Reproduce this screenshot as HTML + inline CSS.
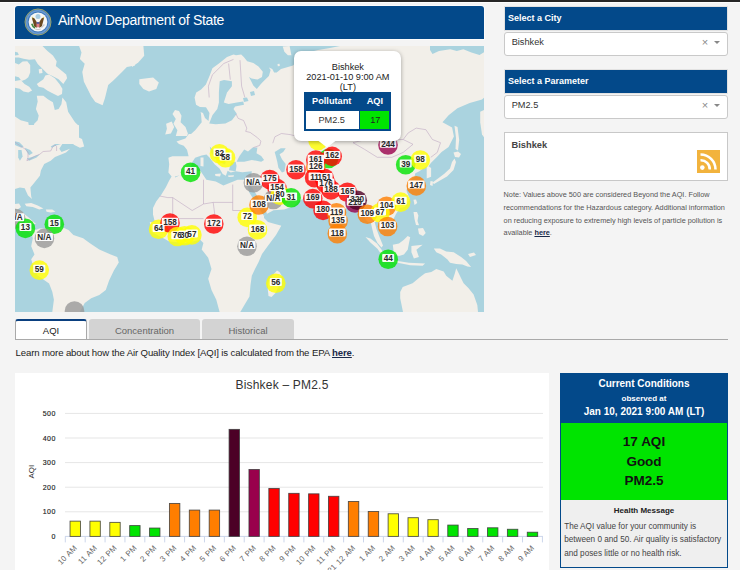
<!DOCTYPE html>
<html><head><meta charset="utf-8"><title>AirNow Department of State</title>
<style>
html,body{margin:0;padding:0;}
body{width:740px;height:570px;overflow:hidden;position:relative;background:#f4f4f4;font-family:"Liberation Sans",sans-serif;}
</style></head><body>
<div style="position:absolute;left:0px;top:0px;width:740px;height:2px;background:#262626"></div><div style="position:absolute;left:0px;top:2px;width:740px;height:1px;background:#fdfdfd"></div><div style="position:absolute;left:14px;top:5px;width:471px;height:35px;background:#fbfbfb;border-radius:4px 4px 0 0"></div><div style="position:absolute;left:15px;top:6px;width:469px;height:33px;background:#03498a;border-radius:3px 3px 0 0"></div><svg style="position:absolute;left:24px;top:8.3px" width="28" height="28" viewBox="0 0 28 28">
<circle cx="14" cy="14" r="13" fill="#3c78bd" stroke="#a9ac62" stroke-width="0.9"/>
<circle cx="14" cy="14" r="11.3" fill="none" stroke="#6b9ad0" stroke-width="1.6"/>
<circle cx="14" cy="14" r="9.4" fill="#f7f7f5"/>
<circle cx="14" cy="8.6" r="2.5" fill="#a9cde3"/>
<path d="M7.8 9.6 L10.3 10.2 L13 14.6 L12.8 19.8 L10.2 18.4 Z" fill="#6c4a1f"/>
<path d="M20.2 9.6 L17.7 10.2 L15 14.6 L15.2 19.8 L17.8 18.4 Z" fill="#6c4a1f"/>
<path d="M8 8.6 L9.6 9.8 L8.3 10.6 Z M20 8.6 L18.4 9.8 L19.7 10.6 Z" fill="#d8c858"/>
<path d="M12.6 14.6 L15.4 14.6 L15.4 18.6 Q14 20.4 12.6 18.6 Z" fill="#e27b86"/>
<rect x="12.6" y="14.2" width="2.8" height="1.5" fill="#3553a0"/>
<path d="M7.8 15.8 Q8.6 18.8 11 20" stroke="#3f8a3f" stroke-width="1.6" fill="none"/>
<path d="M17.4 19.5 L20.4 16.6" stroke="#c8c8c8" stroke-width="1.4"/>
<path d="M11.2 21 Q14 22.4 16.8 21" stroke="#c9c9c9" stroke-width="1" fill="none"/>
</svg><div style="position:absolute;left:58.00px;top:13.10px;font-size:14px;line-height:14px;font-weight:normal;color:#fff;white-space:nowrap;letter-spacing:-0.32px">AirNow Department of State</div><div style="position:absolute;left:15px;top:46px;width:469px;height:266px;overflow:hidden;background:#aad3df"><svg width="469" height="266" viewBox="0 0 469 266" style="display:block"><rect width="469" height="266" fill="#aad3df"/><polygon points="64.1,0.0 66.5,6.5 64.9,13.0 69.7,17.8 67.3,25.9 68.9,35.7 72.2,42.2 76.2,50.3 80.3,55.9 87.6,59.2 90.0,51.9 93.2,38.9 98.9,34.1 107.0,25.9 111.9,21.1 120.0,19.5 120.0,0.0" fill="#f2efe9"/><polygon points="0.0,0.0 27.5,0.0 32.2,4.7 37.9,9.5 41.7,15.2 40.8,19.9 45.5,23.7 51.2,28.4 52.1,32.2 48.3,37.9 43.6,33.2 37.9,30.3 32.2,27.5 27.5,22.7 22.7,18.0 19.9,13.3 14.2,13.7 8.5,12.8 3.8,11.4 0.0,11.4" fill="#f2efe9"/><polygon points="0.0,17.1 3.8,18.5 7.6,15.6 12.3,15.2 15.2,19.0 15.2,26.5 13.3,31.3 10.4,33.6 6.6,35.1 3.8,31.3 0.0,30.3" fill="#f2efe9"/><polygon points="0.0,35.1 5.7,34.1 9.5,37.9 14.2,40.8 17.1,44.5 13.3,46.4 8.5,45.5 4.7,42.7 0.0,41.7" fill="#f2efe9"/><polygon points="21.8,37.9 28.4,33.2 30.3,29.4 34.1,28.4 39.8,32.2 44.5,37.9 47.4,42.7 47.0,48.0 43.0,50.0 37.0,47.0 32.2,44.5 28.4,41.7 23.7,40.8" fill="#f2efe9"/><polygon points="23.7,23.2 27.0,22.7 27.5,27.0 24.2,27.5" fill="#f2efe9"/><polygon points="0.0,70.5 5.7,74.3 13.3,76.2 14.2,81.9 15.2,85.7 18.0,87.6 19.9,84.8 19.0,78.1 22.7,74.3 23.7,69.6 20.9,63.0 22.7,55.4 21.8,49.7 28.4,49.7 33.2,53.5 37.9,56.3 39.8,63.9 43.6,63.0 46.4,58.2 47.4,51.6 51.2,56.3 53.1,65.8 60.0,76.2 64.0,80.0 64.0,98.0 0.0,98.0" fill="#f2efe9"/><polygon points="117.0,0.0 128.4,0.0 129.2,9.7 123.5,16.2 117.0,21.1" fill="#f2efe9"/><polygon points="124.3,33.2 130.0,32.4 138.1,31.6 143.8,36.5 141.3,43.0 134.0,45.4 128.4,43.0 124.3,38.1" fill="#f2efe9"/><polygon points="160.0,64.1 164.0,64.9 166.5,69.7 165.6,76.2 170.5,81.1 172.9,87.6 172.1,90.0 160.8,90.0 162.4,84.3 158.4,77.8 160.8,73.0 157.5,68.1" fill="#f2efe9"/><polygon points="151.1,77.8 156.7,75.4 159.2,81.1 155.9,87.6 150.2,88.4 151.9,82.7" fill="#f2efe9"/><polygon points="179.6,51.5 181.2,46.6 186.1,43.4 190.9,38.5 195.0,28.8 197.4,22.3 203.9,17.5 212.0,11.0 218.5,8.5 221.0,9.2 226.2,8.4 228.8,11.0 232.2,15.3 238.3,17.0 243.5,20.5 247.8,25.7 247.0,30.9 242.6,33.5 236.6,32.6 234.0,30.9 235.7,34.3 238.3,39.5 241.8,43.0 246.1,37.8 249.5,34.3 253.9,30.0 255.6,24.0 253.9,21.4 257.3,23.1 259.1,26.5 261.7,26.5 266.0,23.1 271.2,21.4 278.1,19.6 283.0,14.0 288.0,9.0 295.0,6.0 303.0,4.0 315.0,2.0 325.0,0.0 415.0,0.0 415.0,90.0 173.8,90.0 180.2,84.3 186.7,76.2 186.0,68.0 185.0,63.0 181.2,59.6" fill="#f2efe9"/><polygon points="351.0,0.0 412.6,0.0 417.5,8.1 424.0,4.9 435.3,3.2 441.8,4.9 448.3,3.2 456.4,6.5 464.5,8.9 471.0,4.9 471.0,90.0 351.0,90.0" fill="#f2efe9"/><polygon points="0.0,79.0 63.8,79.0 64.0,84.0 60.0,88.0 58.4,88.7 50.8,92.0 43.2,96.3 35.7,100.6 36.8,101.7 41.1,99.5 47.6,97.4 44.3,102.8 46.5,106.0 55.1,102.8 51.0,106.5 44.3,109.3 40.0,111.0 35.7,114.7 29.2,117.9 25.9,124.4 24.9,129.8 19.5,136.6 15.4,141.5 16.2,150.4 17.0,152.9 13.0,149.6 9.7,142.3 4.9,141.5 0.0,143.1" fill="#f2efe9"/><polygon points="9.7,157.7 16.2,156.9 22.7,159.4 28.4,162.6 24.3,163.4 17.8,161.0 11.4,160.2" fill="#f2efe9"/><polygon points="30.8,163.4 37.3,163.4 40.5,165.8 35.7,166.6 31.6,165.8" fill="#f2efe9"/><polygon points="0.0,164.2 6.5,165.8 14.6,172.3 21.1,178.0 0.0,178.0" fill="#f2efe9"/><polygon points="16.2,185.7 24.3,182.5 32.4,182.5 47.0,180.9 53.5,184.1 58.4,189.0 68.1,192.2 74.6,197.1 84.3,203.6 95.7,208.4 102.2,210.9 103.8,216.5 98.9,224.6 94.1,234.4 90.8,244.1 84.3,249.0 76.2,252.2 69.7,257.1 64.9,266.0 37.3,266.0 38.9,253.8 37.3,245.7 34.1,237.6 22.7,229.5 18.6,221.4 16.2,213.3 19.5,208.4 16.2,200.3 17.8,192.2" fill="#f2efe9"/><polygon points="0.0,176.0 9.7,176.0 16.2,182.5 21.1,184.1 16.2,187.4 9.7,184.1 3.2,180.9 0.0,179.2" fill="#f2efe9"/><polygon points="173.8,88.0 170.4,92.4 161.5,95.6 164.0,98.0 168.8,99.7 172.0,103.7 173.6,110.2 165.5,110.2 157.4,110.2 153.4,111.8 154.2,118.3 153.4,126.4 156.6,130.5 154.2,134.5 151.0,141.0 146.1,149.1 141.2,155.6 138.0,162.1 138.0,168.6 139.6,175.1 135.0,180.0 137.2,186.0 469.0,186.0 469.0,88.0" fill="#f2efe9"/><polygon points="117.0,176.0 285.0,176.0 285.0,266.0 117.0,266.0" fill="#f2efe9"/><polygon points="0.0,5.7 2.8,6.6 3.8,9.0 0.0,9.5" fill="#aad3df"/><polygon points="204.7,35.3 209.0,34.0 216.9,35.3 216.9,40.2 212.0,46.6 208.8,56.4 213.6,58.0 221.8,56.4 228.2,55.6 229.0,58.8 220.1,60.4 218.5,62.9 221.8,67.7 216.9,74.2 210.4,77.5 200.7,78.3 194.2,77.5 197.4,69.3 202.3,62.9 203.9,56.4 203.9,46.6" fill="#aad3df"/><polygon points="179.6,58.0 185.0,61.0 191.0,61.2 194.5,67.0 193.5,75.0 190.0,72.0 188.0,67.0 183.0,65.0 179.6,63.0" fill="#aad3df"/><polygon points="228.0,52.0 232.0,51.5 233.5,55.0 229.0,56.0" fill="#aad3df"/><polygon points="235.0,46.0 239.0,45.0 240.0,49.0 236.0,50.0" fill="#aad3df"/><polygon points="0.0,95.2 4.3,96.3 8.6,100.6 6.5,101.7 2.2,100.1 0.0,99.0" fill="#aad3df"/><polygon points="3.2,103.9 6.5,103.9 7.6,110.4 4.9,114.7 3.2,111.4" fill="#aad3df"/><polygon points="9.7,101.7 15.1,103.9 17.8,107.1 14.1,109.3 11.9,106.0" fill="#aad3df"/><polygon points="11.9,112.5 18.4,110.4 24.9,108.2 21.6,111.4 14.1,114.7" fill="#aad3df"/><polygon points="159.9,130.5 170.4,128.0 175.3,123.2 176.9,116.7 180.1,111.8 186.6,109.4 191.5,108.6 194.7,111.8 199.6,118.3 204.5,122.4 207.7,128.0 210.9,129.7 212.6,124.8 215.8,126.4 220.7,125.2 227.3,126.2 236.8,125.2 235.8,133.7 222.6,133.7 208.4,139.4 200.8,135.6 191.4,133.7 185.7,125.2 180.0,124.3 170.0,127.0 160.0,131.5" fill="#aad3df"/><polygon points="194.7,100.5 199.6,105.4 206.1,111.8 211.0,116.7 209.3,118.3 202.8,115.1 196.3,107.0" fill="#aad3df"/><polygon points="216.0,116.7 220.7,115.8 221.5,120.0 220.7,125.2 214.0,124.3 215.0,120.0" fill="#aad3df"/><polygon points="221.6,115.8 224.5,110.1 229.2,103.5 233.0,105.4 237.7,101.6 242.4,101.6 241.5,107.2 246.2,110.1 249.1,113.9 246.2,115.8 236.8,113.9 229.2,115.8" fill="#aad3df"/><polygon points="259.7,105.9 265.8,102.2 270.7,102.2 268.2,105.9 264.6,108.3 267.0,113.2 270.7,118.1 269.5,125.4 267.0,126.6 263.4,121.7 262.2,115.6 261.0,110.8" fill="#aad3df"/><polygon points="233.0,140.0 236.0,140.0 241.0,148.0 246.0,157.0 251.0,165.0 252.0,168.0 249.0,170.0 244.0,162.0 239.0,154.0 234.0,146.0" fill="#aad3df"/><polygon points="249.0,170.0 251.2,168.3 258.5,164.3 269.1,163.5 278.8,160.2 284.5,154.5 290.0,152.0 305.0,154.0 305.0,214.0 247.0,214.0 253.0,202.0 261.0,192.0 266.6,179.7 260.0,178.0 253.0,176.0 249.0,172.0" fill="#aad3df"/><polygon points="266.6,176.0 266.6,179.3 261.0,189.0 252.8,200.0 247.0,208.0 243.6,216.0 240.0,223.0 236.8,229.8 235.5,239.0 234.5,250.5 230.0,258.0 225.3,266.0 471.0,266.0 471.0,176.0" fill="#aad3df"/><polygon points="117.0,176.0 134.8,176.0 136.5,185.7 154.3,195.5 170.5,197.1 185.1,193.8 188.4,197.1 186.7,203.6 193.2,211.7 196.5,223.0 193.2,232.8 196.5,244.1 201.3,253.8 204.6,266.0 117.0,266.0" fill="#aad3df"/><polygon points="305.0,162.9 285.0,161.0 295.0,157.0 303.0,154.0 310.0,162.0 315.0,170.0 319.0,179.0 322.0,188.0 325.0,180.0 328.0,169.0 331.0,162.0 340.0,161.0 347.0,166.0 351.0,174.0 355.0,178.0 358.7,177.1 362.7,189.3 368.4,199.0 366.0,192.0 362.0,186.0 361.0,180.0 364.0,176.0 370.0,184.0 377.0,176.0 381.0,168.0 385.0,162.0 389.9,161.0 394.8,152.9 391.5,144.8 393.2,136.6 399.6,130.2 400.3,127.2 404.5,125.3 408.6,122.0 411.7,120.2 411.7,132.5 416.1,130.7 416.1,121.9 413.5,120.2 416.1,116.7 421.4,111.4 426.6,106.1 433.6,100.9 438.9,90.4 437.1,81.6 427.5,76.3 433.6,69.3 442.4,62.3 454.7,57.0 467.0,53.5 471.0,50.0 471.0,266.0 305.0,266.0" fill="#aad3df"/><polygon points="267.7,0.6 274.6,0.0 276.4,9.2 272.9,9.2 269.4,5.8" fill="#f2efe9"/><polygon points="262.5,18.0 264.5,17.8 264.8,20.0 262.8,20.2" fill="#f2efe9"/><polygon points="58.4,98.5 62.7,90.9 67.0,93.1 69.2,100.6 64.9,101.7" fill="#f2efe9"/><polygon points="185.5,111.5 188.5,111.5 188.5,120.5 185.5,120.0" fill="#f2efe9"/><polygon points="200.0,128.0 206.0,127.5 205.0,130.5 200.5,130.0" fill="#f2efe9"/><polygon points="213.0,129.5 219.0,129.2 218.5,130.8 213.5,131.0" fill="#f2efe9"/><polygon points="262.0,224.5 264.5,226.0 266.6,229.8 264.3,239.0 260.5,247.0 256.5,251.0 253.5,250.0 252.8,243.6 253.5,236.0 257.4,229.5" fill="#f2efe9"/><polygon points="0.0,158.0 4.0,157.5 6.0,161.0 2.0,164.0 0.0,163.0" fill="#f2efe9"/><polygon points="465.2,65.8 471.0,63.0 471.0,94.0 467.0,88.6 465.2,76.3" fill="#f2efe9"/><polygon points="439.5,79.8 442.5,81.0 444.2,94.0 443.0,104.4 440.5,103.0 441.0,92.0" fill="#f2efe9"/><polygon points="438.5,106.5 443.0,105.5 446.0,108.0 444.0,111.5 440.0,111.0" fill="#f2efe9"/><polygon points="439.5,112.5 441.0,116.0 438.5,124.0 432.0,130.5 425.0,134.5 419.0,138.0 417.5,136.5 423.0,132.5 429.0,128.0 435.0,122.5 437.0,116.0" fill="#f2efe9"/><polygon points="415.5,135.0 418.0,135.5 417.5,140.0 415.0,139.0" fill="#f2efe9"/><polygon points="398.5,153.7 401.0,153.5 402.2,157.0 399.5,159.0" fill="#f2efe9"/><polygon points="398.5,165.9 402.0,166.0 403.4,169.5 402.5,175.0 404.0,179.3 401.0,179.0 399.5,173.0" fill="#f2efe9"/><polygon points="403.0,182.5 408.0,182.0 410.7,187.0 408.0,190.0 404.0,188.0" fill="#f2efe9"/><polygon points="355.5,175.0 359.5,175.5 361.5,183.0 364.5,191.0 368.0,199.5 366.5,201.5 362.5,197.0 359.0,190.0 357.0,182.0" fill="#f2efe9"/><polygon points="350.5,190.9 355.4,192.5 361.9,197.4 366.8,203.9 369.3,209.7 366.5,209.0 362.7,203.1 355.4,196.6" fill="#f2efe9"/><polygon points="377.8,198.7 384.0,197.5 388.9,193.7 392.7,190.0 395.2,191.2 393.9,197.5 392.7,203.7 388.9,208.6 384.0,209.9 379.0,208.6" fill="#f2efe9"/><polygon points="396.4,200.0 407.6,198.7 401.4,203.7 403.9,211.1 398.9,212.4 396.4,206.2" fill="#f2efe9"/><polygon points="369.0,213.0 382.7,214.9 393.9,216.7 410.1,217.4 407.6,219.8 395.2,219.2 382.7,216.7 371.0,215.5" fill="#f2efe9"/><polygon points="418.8,202.4 425.0,202.4 431.2,205.5 438.7,206.2 446.1,211.1 451.1,214.9 456.1,221.1 452.4,220.5 447.4,218.6 441.2,218.0 435.0,216.7 432.5,213.6 426.2,208.6 421.3,206.2" fill="#f2efe9"/><polygon points="453.0,208.0 459.0,206.5 461.0,209.0 455.0,211.0" fill="#f2efe9"/><polygon points="385.2,245.9 387.7,241.0 397.6,237.2 405.1,231.0 410.1,227.3 416.3,226.1 421.3,222.9 428.7,225.4 431.2,229.8 437.4,234.8 439.9,227.3 441.2,222.3 443.7,227.3 446.1,232.3 448.6,237.2 453.6,242.2 458.6,248.4 462.3,259.0 463.0,266.0 388.0,266.0 385.2,252.2" fill="#f2efe9"/><polyline points="0.0,96.3 6.5,100.6 9.7,102.8 13.0,106.0 13.0,111.4 11.9,114.7 16.2,112.5 19.5,110.4 24.9,108.2 28.1,105.5 35.7,105.0 37.8,100.6 40.0,99.0 41.6,100.6 41.6,105.0" fill="none" stroke="#b9a0bd" stroke-width="0.7" stroke-opacity="0.75"/><polyline points="144.7,150.0 152.8,151.6 157.7,151.6 177.2,164.5 188.5,158.0 198.2,156.4 217.7,156.4" fill="none" stroke="#b9a0bd" stroke-width="0.7" stroke-opacity="0.75"/><polyline points="188.5,133.7 188.5,158.0" fill="none" stroke="#b9a0bd" stroke-width="0.7" stroke-opacity="0.75"/><polyline points="198.2,156.4 199.9,169.4" fill="none" stroke="#b9a0bd" stroke-width="0.7" stroke-opacity="0.75"/><polyline points="217.7,138.6 217.7,164.5 235.5,164.5" fill="none" stroke="#b9a0bd" stroke-width="0.7" stroke-opacity="0.75"/><polyline points="157.7,151.6 157.7,172.6 188.5,172.6" fill="none" stroke="#b9a0bd" stroke-width="0.7" stroke-opacity="0.75"/><polyline points="338.0,96.7 349.3,103.2 362.3,111.3 376.9,111.3 388.2,106.4 398.0,98.3 388.2,93.5 393.1,87.0 401.2,82.1 410.9,83.7 417.4,93.5 425.5,96.7 422.3,106.4 415.8,111.3" fill="none" stroke="#b9a0bd" stroke-width="0.7" stroke-opacity="0.75"/><polyline points="338.0,96.7 357.4,91.8 373.6,93.5 388.2,93.5" fill="none" stroke="#b9a0bd" stroke-width="0.7" stroke-opacity="0.75"/><polyline points="221.0,68.0 223.2,72.4 228.6,74.5 231.8,82.1 230.7,85.4 235.1,86.4 242.6,91.8 245.9,95.1 244.8,99.4 238.3,101.6" fill="none" stroke="#b9a0bd" stroke-width="0.7" stroke-opacity="0.75"/><polyline points="257.8,97.2 259.9,90.8 266.4,87.5 275.1,88.6 279.4,89.7" fill="none" stroke="#b9a0bd" stroke-width="0.7" stroke-opacity="0.75"/><polyline points="194.2,51.5 193.4,40.2 197.4,28.8 208.8,17.5 218.5,13.4" fill="none" stroke="#b9a0bd" stroke-width="0.7" stroke-opacity="0.75"/><polyline points="213.6,17.5 215.3,33.7" fill="none" stroke="#b9a0bd" stroke-width="0.7" stroke-opacity="0.75"/><polyline points="225.0,14.2 226.6,40.2 229.9,51.5" fill="none" stroke="#b9a0bd" stroke-width="0.7" stroke-opacity="0.75"/><defs><filter id="hb" x="-30%" y="-50%" width="160%" height="200%"><feGaussianBlur stdDeviation="0.6"/></filter></defs><circle cx="0.7" cy="172.6" r="9.8" fill="#999999" fill-opacity="0.8"/><circle cx="10.4" cy="182.4" r="9.8" fill="#00e400" fill-opacity="0.8"/><circle cx="39.3" cy="178.3" r="9.8" fill="#00e400" fill-opacity="0.8"/><circle cx="29.4" cy="192.4" r="9.8" fill="#999999" fill-opacity="0.8"/><circle cx="24.3" cy="224.1" r="9.8" fill="#ffff00" fill-opacity="0.8"/><circle cx="59.5" cy="265.0" r="9.8" fill="#999999" fill-opacity="0.8"/><circle cx="175.6" cy="126.4" r="9.8" fill="#00e400" fill-opacity="0.8"/><circle cx="204.5" cy="107.8" r="9.8" fill="#ffff00" fill-opacity="0.8"/><circle cx="210.6" cy="111.8" r="9.8" fill="#ffff00" fill-opacity="0.8"/><circle cx="143.6" cy="183.2" r="9.8" fill="#ffff00" fill-opacity="0.8"/><circle cx="155.0" cy="177.0" r="9.8" fill="#ff0000" fill-opacity="0.8"/><circle cx="162.3" cy="190.5" r="9.8" fill="#ffff00" fill-opacity="0.8"/><circle cx="169.6" cy="189.7" r="9.8" fill="#ffff00" fill-opacity="0.8"/><circle cx="176.9" cy="188.9" r="9.8" fill="#ffff00" fill-opacity="0.8"/><circle cx="198.8" cy="178.0" r="9.8" fill="#ff0000" fill-opacity="0.8"/><circle cx="232.2" cy="171.4" r="9.8" fill="#ffff00" fill-opacity="0.8"/><circle cx="242.5" cy="183.8" r="9.8" fill="#ffff00" fill-opacity="0.8"/><circle cx="232.0" cy="200.3" r="9.8" fill="#999999" fill-opacity="0.8"/><circle cx="238.4" cy="136.7" r="9.8" fill="#999999" fill-opacity="0.8"/><circle cx="244.0" cy="159.0" r="9.8" fill="#ff7e00" fill-opacity="0.8"/><circle cx="254.8" cy="133.5" r="9.8" fill="#ff0000" fill-opacity="0.8"/><circle cx="262.1" cy="142.6" r="9.8" fill="#ff0000" fill-opacity="0.8"/><circle cx="258.4" cy="153.5" r="9.8" fill="#999999" fill-opacity="0.8"/><circle cx="265.1" cy="149.3" r="9.8" fill="#ffff00" fill-opacity="0.8"/><circle cx="276.1" cy="151.7" r="9.8" fill="#00e400" fill-opacity="0.8"/><circle cx="281.0" cy="123.7" r="9.8" fill="#ff0000" fill-opacity="0.8"/><circle cx="303.0" cy="94.5" r="9.8" fill="#ffff00" fill-opacity="0.8"/><circle cx="313.5" cy="112.5" r="9.8" fill="#00e400" fill-opacity="0.8"/><circle cx="300.8" cy="121.4" r="9.8" fill="#ff7e00" fill-opacity="0.8"/><circle cx="300.8" cy="114.0" r="9.8" fill="#ff0000" fill-opacity="0.8"/><circle cx="299.6" cy="131.7" r="9.8" fill="#ff0000" fill-opacity="0.8"/><circle cx="309.3" cy="132.3" r="9.8" fill="#ff0000" fill-opacity="0.8"/><circle cx="311.1" cy="137.8" r="9.8" fill="#ff0000" fill-opacity="0.8"/><circle cx="316.0" cy="143.9" r="9.8" fill="#ff0000" fill-opacity="0.8"/><circle cx="332.4" cy="146.3" r="9.8" fill="#ff0000" fill-opacity="0.8"/><circle cx="340.0" cy="157.0" r="9.8" fill="#99004c" fill-opacity="0.8"/><circle cx="342.2" cy="154.2" r="9.8" fill="#4c0026" fill-opacity="0.8"/><circle cx="297.8" cy="152.6" r="9.8" fill="#ff0000" fill-opacity="0.8"/><circle cx="308.1" cy="164.4" r="9.8" fill="#ff0000" fill-opacity="0.8"/><circle cx="321.5" cy="166.7" r="9.8" fill="#ff7e00" fill-opacity="0.8"/><circle cx="323.1" cy="174.8" r="9.8" fill="#ff7e00" fill-opacity="0.8"/><circle cx="322.3" cy="187.8" r="9.8" fill="#ff7e00" fill-opacity="0.8"/><circle cx="352.3" cy="168.3" r="9.8" fill="#ff7e00" fill-opacity="0.8"/><circle cx="371.5" cy="160.2" r="9.8" fill="#ff7e00" fill-opacity="0.8"/><circle cx="365.0" cy="166.7" r="9.8" fill="#ffff00" fill-opacity="0.8"/><circle cx="385.7" cy="156.1" r="9.8" fill="#ffff00" fill-opacity="0.8"/><circle cx="372.6" cy="180.5" r="9.8" fill="#ff7e00" fill-opacity="0.8"/><circle cx="373.2" cy="213.2" r="9.8" fill="#00e400" fill-opacity="0.8"/><circle cx="373.0" cy="99.0" r="9.8" fill="#99004c" fill-opacity="0.8"/><circle cx="390.7" cy="118.8" r="9.8" fill="#00e400" fill-opacity="0.8"/><circle cx="405.3" cy="114.0" r="9.8" fill="#ffff00" fill-opacity="0.8"/><circle cx="401.3" cy="139.9" r="9.8" fill="#ff7e00" fill-opacity="0.8"/><circle cx="260.8" cy="237.3" r="9.8" fill="#ffff00" fill-opacity="0.8"/><circle cx="317.2" cy="110.4" r="9.8" fill="#ff0000" fill-opacity="0.8"/><rect x="-7.8" y="167.3" width="17.0" height="8" rx="1" fill="#fff" fill-opacity="0.95" filter="url(#hb)"/><rect x="4.4" y="177.1" width="12.0" height="8" rx="1" fill="#fff" fill-opacity="0.95" filter="url(#hb)"/><rect x="33.3" y="173.0" width="12.0" height="8" rx="1" fill="#fff" fill-opacity="0.95" filter="url(#hb)"/><rect x="20.9" y="187.1" width="17.0" height="8" rx="1" fill="#fff" fill-opacity="0.95" filter="url(#hb)"/><rect x="18.3" y="218.8" width="12.0" height="8" rx="1" fill="#fff" fill-opacity="0.95" filter="url(#hb)"/><rect x="169.6" y="121.1" width="12.0" height="8" rx="1" fill="#fff" fill-opacity="0.95" filter="url(#hb)"/><rect x="198.5" y="102.5" width="12.0" height="8" rx="1" fill="#fff" fill-opacity="0.95" filter="url(#hb)"/><rect x="204.6" y="106.5" width="12.0" height="8" rx="1" fill="#fff" fill-opacity="0.95" filter="url(#hb)"/><rect x="137.6" y="177.9" width="12.0" height="8" rx="1" fill="#fff" fill-opacity="0.95" filter="url(#hb)"/><rect x="146.8" y="171.7" width="16.5" height="8" rx="1" fill="#fff" fill-opacity="0.95" filter="url(#hb)"/><rect x="156.3" y="185.2" width="12.0" height="8" rx="1" fill="#fff" fill-opacity="0.95" filter="url(#hb)"/><rect x="163.6" y="184.4" width="12.0" height="8" rx="1" fill="#fff" fill-opacity="0.95" filter="url(#hb)"/><rect x="170.9" y="183.6" width="12.0" height="8" rx="1" fill="#fff" fill-opacity="0.95" filter="url(#hb)"/><rect x="190.6" y="172.7" width="16.5" height="8" rx="1" fill="#fff" fill-opacity="0.95" filter="url(#hb)"/><rect x="226.2" y="166.1" width="12.0" height="8" rx="1" fill="#fff" fill-opacity="0.95" filter="url(#hb)"/><rect x="234.2" y="178.5" width="16.5" height="8" rx="1" fill="#fff" fill-opacity="0.95" filter="url(#hb)"/><rect x="223.5" y="195.0" width="17.0" height="8" rx="1" fill="#fff" fill-opacity="0.95" filter="url(#hb)"/><rect x="229.9" y="131.4" width="17.0" height="8" rx="1" fill="#fff" fill-opacity="0.95" filter="url(#hb)"/><rect x="235.8" y="153.7" width="16.5" height="8" rx="1" fill="#fff" fill-opacity="0.95" filter="url(#hb)"/><rect x="246.6" y="128.2" width="16.5" height="8" rx="1" fill="#fff" fill-opacity="0.95" filter="url(#hb)"/><rect x="253.9" y="137.3" width="16.5" height="8" rx="1" fill="#fff" fill-opacity="0.95" filter="url(#hb)"/><rect x="249.9" y="148.2" width="17.0" height="8" rx="1" fill="#fff" fill-opacity="0.95" filter="url(#hb)"/><rect x="259.1" y="144.0" width="12.0" height="8" rx="1" fill="#fff" fill-opacity="0.95" filter="url(#hb)"/><rect x="270.1" y="146.4" width="12.0" height="8" rx="1" fill="#fff" fill-opacity="0.95" filter="url(#hb)"/><rect x="272.8" y="118.4" width="16.5" height="8" rx="1" fill="#fff" fill-opacity="0.95" filter="url(#hb)"/><rect x="292.6" y="116.1" width="16.5" height="8" rx="1" fill="#fff" fill-opacity="0.95" filter="url(#hb)"/><rect x="292.6" y="108.7" width="16.5" height="8" rx="1" fill="#fff" fill-opacity="0.95" filter="url(#hb)"/><rect x="293.6" y="126.4" width="12.0" height="8" rx="1" fill="#fff" fill-opacity="0.95" filter="url(#hb)"/><rect x="301.1" y="127.0" width="16.5" height="8" rx="1" fill="#fff" fill-opacity="0.95" filter="url(#hb)"/><rect x="302.9" y="132.5" width="16.5" height="8" rx="1" fill="#fff" fill-opacity="0.95" filter="url(#hb)"/><rect x="307.8" y="138.6" width="16.5" height="8" rx="1" fill="#fff" fill-opacity="0.95" filter="url(#hb)"/><rect x="324.1" y="141.0" width="16.5" height="8" rx="1" fill="#fff" fill-opacity="0.95" filter="url(#hb)"/><rect x="331.8" y="151.7" width="16.5" height="8" rx="1" fill="#fff" fill-opacity="0.95" filter="url(#hb)"/><rect x="333.9" y="148.9" width="16.5" height="8" rx="1" fill="#fff" fill-opacity="0.95" filter="url(#hb)"/><rect x="289.6" y="147.3" width="16.5" height="8" rx="1" fill="#fff" fill-opacity="0.95" filter="url(#hb)"/><rect x="299.9" y="159.1" width="16.5" height="8" rx="1" fill="#fff" fill-opacity="0.95" filter="url(#hb)"/><rect x="313.2" y="161.4" width="16.5" height="8" rx="1" fill="#fff" fill-opacity="0.95" filter="url(#hb)"/><rect x="314.9" y="169.5" width="16.5" height="8" rx="1" fill="#fff" fill-opacity="0.95" filter="url(#hb)"/><rect x="314.1" y="182.5" width="16.5" height="8" rx="1" fill="#fff" fill-opacity="0.95" filter="url(#hb)"/><rect x="344.1" y="163.0" width="16.5" height="8" rx="1" fill="#fff" fill-opacity="0.95" filter="url(#hb)"/><rect x="363.2" y="154.9" width="16.5" height="8" rx="1" fill="#fff" fill-opacity="0.95" filter="url(#hb)"/><rect x="359.0" y="161.4" width="12.0" height="8" rx="1" fill="#fff" fill-opacity="0.95" filter="url(#hb)"/><rect x="379.7" y="150.8" width="12.0" height="8" rx="1" fill="#fff" fill-opacity="0.95" filter="url(#hb)"/><rect x="364.4" y="175.2" width="16.5" height="8" rx="1" fill="#fff" fill-opacity="0.95" filter="url(#hb)"/><rect x="367.2" y="207.9" width="12.0" height="8" rx="1" fill="#fff" fill-opacity="0.95" filter="url(#hb)"/><rect x="364.8" y="93.7" width="16.5" height="8" rx="1" fill="#fff" fill-opacity="0.95" filter="url(#hb)"/><rect x="384.7" y="113.5" width="12.0" height="8" rx="1" fill="#fff" fill-opacity="0.95" filter="url(#hb)"/><rect x="399.3" y="108.7" width="12.0" height="8" rx="1" fill="#fff" fill-opacity="0.95" filter="url(#hb)"/><rect x="393.1" y="134.6" width="16.5" height="8" rx="1" fill="#fff" fill-opacity="0.95" filter="url(#hb)"/><rect x="254.8" y="232.0" width="12.0" height="8" rx="1" fill="#fff" fill-opacity="0.95" filter="url(#hb)"/><rect x="308.9" y="105.1" width="16.5" height="8" rx="1" fill="#fff" fill-opacity="0.95" filter="url(#hb)"/><text x="0.7" y="174.4" text-anchor="middle" font-family="Liberation Sans" font-weight="bold" font-size="8.2" fill="#2a2a2a">N/A</text><text x="10.4" y="184.2" text-anchor="middle" font-family="Liberation Sans" font-weight="bold" font-size="8.2" fill="#2a2a2a">13</text><text x="39.3" y="180.1" text-anchor="middle" font-family="Liberation Sans" font-weight="bold" font-size="8.2" fill="#2a2a2a">15</text><text x="29.4" y="194.2" text-anchor="middle" font-family="Liberation Sans" font-weight="bold" font-size="8.2" fill="#2a2a2a">N/A</text><text x="24.3" y="225.9" text-anchor="middle" font-family="Liberation Sans" font-weight="bold" font-size="8.2" fill="#2a2a2a">59</text><text x="175.6" y="128.2" text-anchor="middle" font-family="Liberation Sans" font-weight="bold" font-size="8.2" fill="#2a2a2a">41</text><text x="204.5" y="109.6" text-anchor="middle" font-family="Liberation Sans" font-weight="bold" font-size="8.2" fill="#2a2a2a">82</text><text x="210.6" y="113.6" text-anchor="middle" font-family="Liberation Sans" font-weight="bold" font-size="8.2" fill="#2a2a2a">58</text><text x="143.6" y="185.0" text-anchor="middle" font-family="Liberation Sans" font-weight="bold" font-size="8.2" fill="#2a2a2a">64</text><text x="155.0" y="178.8" text-anchor="middle" font-family="Liberation Sans" font-weight="bold" font-size="8.2" fill="#2a2a2a">158</text><text x="162.3" y="192.3" text-anchor="middle" font-family="Liberation Sans" font-weight="bold" font-size="8.2" fill="#2a2a2a">76</text><text x="169.6" y="191.5" text-anchor="middle" font-family="Liberation Sans" font-weight="bold" font-size="8.2" fill="#2a2a2a">30</text><text x="176.9" y="190.7" text-anchor="middle" font-family="Liberation Sans" font-weight="bold" font-size="8.2" fill="#2a2a2a">57</text><text x="198.8" y="179.8" text-anchor="middle" font-family="Liberation Sans" font-weight="bold" font-size="8.2" fill="#2a2a2a">172</text><text x="232.2" y="173.2" text-anchor="middle" font-family="Liberation Sans" font-weight="bold" font-size="8.2" fill="#2a2a2a">72</text><text x="242.5" y="185.6" text-anchor="middle" font-family="Liberation Sans" font-weight="bold" font-size="8.2" fill="#2a2a2a">168</text><text x="232.0" y="202.1" text-anchor="middle" font-family="Liberation Sans" font-weight="bold" font-size="8.2" fill="#2a2a2a">N/A</text><text x="238.4" y="138.5" text-anchor="middle" font-family="Liberation Sans" font-weight="bold" font-size="8.2" fill="#2a2a2a">N/A</text><text x="244.0" y="160.8" text-anchor="middle" font-family="Liberation Sans" font-weight="bold" font-size="8.2" fill="#2a2a2a">108</text><text x="254.8" y="135.3" text-anchor="middle" font-family="Liberation Sans" font-weight="bold" font-size="8.2" fill="#2a2a2a">175</text><text x="262.1" y="144.4" text-anchor="middle" font-family="Liberation Sans" font-weight="bold" font-size="8.2" fill="#2a2a2a">154</text><text x="258.4" y="155.3" text-anchor="middle" font-family="Liberation Sans" font-weight="bold" font-size="8.2" fill="#2a2a2a">N/A</text><text x="265.1" y="151.1" text-anchor="middle" font-family="Liberation Sans" font-weight="bold" font-size="8.2" fill="#2a2a2a">80</text><text x="276.1" y="153.5" text-anchor="middle" font-family="Liberation Sans" font-weight="bold" font-size="8.2" fill="#2a2a2a">31</text><text x="281.0" y="125.5" text-anchor="middle" font-family="Liberation Sans" font-weight="bold" font-size="8.2" fill="#2a2a2a">158</text><text x="300.8" y="123.2" text-anchor="middle" font-family="Liberation Sans" font-weight="bold" font-size="8.2" fill="#2a2a2a">126</text><text x="300.8" y="115.8" text-anchor="middle" font-family="Liberation Sans" font-weight="bold" font-size="8.2" fill="#2a2a2a">161</text><text x="299.6" y="133.5" text-anchor="middle" font-family="Liberation Sans" font-weight="bold" font-size="8.2" fill="#2a2a2a">11</text><text x="309.3" y="134.1" text-anchor="middle" font-family="Liberation Sans" font-weight="bold" font-size="8.2" fill="#2a2a2a">151</text><text x="311.1" y="139.6" text-anchor="middle" font-family="Liberation Sans" font-weight="bold" font-size="8.2" fill="#2a2a2a">176</text><text x="316.0" y="145.7" text-anchor="middle" font-family="Liberation Sans" font-weight="bold" font-size="8.2" fill="#2a2a2a">188</text><text x="332.4" y="148.1" text-anchor="middle" font-family="Liberation Sans" font-weight="bold" font-size="8.2" fill="#2a2a2a">165</text><text x="340.0" y="158.8" text-anchor="middle" font-family="Liberation Sans" font-weight="bold" font-size="8.2" fill="#2a2a2a">215</text><text x="342.2" y="156.0" text-anchor="middle" font-family="Liberation Sans" font-weight="bold" font-size="8.2" fill="#2a2a2a">320</text><text x="297.8" y="154.4" text-anchor="middle" font-family="Liberation Sans" font-weight="bold" font-size="8.2" fill="#2a2a2a">169</text><text x="308.1" y="166.2" text-anchor="middle" font-family="Liberation Sans" font-weight="bold" font-size="8.2" fill="#2a2a2a">180</text><text x="321.5" y="168.5" text-anchor="middle" font-family="Liberation Sans" font-weight="bold" font-size="8.2" fill="#2a2a2a">119</text><text x="323.1" y="176.6" text-anchor="middle" font-family="Liberation Sans" font-weight="bold" font-size="8.2" fill="#2a2a2a">135</text><text x="322.3" y="189.6" text-anchor="middle" font-family="Liberation Sans" font-weight="bold" font-size="8.2" fill="#2a2a2a">118</text><text x="352.3" y="170.1" text-anchor="middle" font-family="Liberation Sans" font-weight="bold" font-size="8.2" fill="#2a2a2a">109</text><text x="371.5" y="162.0" text-anchor="middle" font-family="Liberation Sans" font-weight="bold" font-size="8.2" fill="#2a2a2a">104</text><text x="365.0" y="168.5" text-anchor="middle" font-family="Liberation Sans" font-weight="bold" font-size="8.2" fill="#2a2a2a">67</text><text x="385.7" y="157.9" text-anchor="middle" font-family="Liberation Sans" font-weight="bold" font-size="8.2" fill="#2a2a2a">61</text><text x="372.6" y="182.3" text-anchor="middle" font-family="Liberation Sans" font-weight="bold" font-size="8.2" fill="#2a2a2a">103</text><text x="373.2" y="215.0" text-anchor="middle" font-family="Liberation Sans" font-weight="bold" font-size="8.2" fill="#2a2a2a">44</text><text x="373.0" y="100.8" text-anchor="middle" font-family="Liberation Sans" font-weight="bold" font-size="8.2" fill="#2a2a2a">244</text><text x="390.7" y="120.6" text-anchor="middle" font-family="Liberation Sans" font-weight="bold" font-size="8.2" fill="#2a2a2a">39</text><text x="405.3" y="115.8" text-anchor="middle" font-family="Liberation Sans" font-weight="bold" font-size="8.2" fill="#2a2a2a">98</text><text x="401.3" y="141.7" text-anchor="middle" font-family="Liberation Sans" font-weight="bold" font-size="8.2" fill="#2a2a2a">147</text><text x="260.8" y="239.1" text-anchor="middle" font-family="Liberation Sans" font-weight="bold" font-size="8.2" fill="#2a2a2a">56</text><text x="317.2" y="112.2" text-anchor="middle" font-family="Liberation Sans" font-weight="bold" font-size="8.2" fill="#2a2a2a">162</text></svg></div><div style="position:absolute;left:294px;top:51.3px;width:107px;height:89.5px;background:#fff;border-radius:7px;box-shadow:0 1px 4px rgba(0,0,0,0.35)"></div><svg style="position:absolute;left:316px;top:139px" width="22" height="10" viewBox="0 0 22 10"><path d="M0 0 L22 0 L11 8.5 Z" fill="#fff"/></svg><div style="position:absolute;left:147.90px;width:400px;text-align:center;top:62.78px;font-size:9.2px;line-height:9.2px;font-weight:normal;color:#222;white-space:nowrap;">Bishkek</div><div style="position:absolute;left:147.90px;width:400px;text-align:center;top:72.88px;font-size:9.2px;line-height:9.2px;font-weight:normal;color:#222;white-space:nowrap;">2021-01-10 9:00 AM</div><div style="position:absolute;left:147.90px;width:400px;text-align:center;top:82.78px;font-size:9.2px;line-height:9.2px;font-weight:normal;color:#222;white-space:nowrap;">(LT)</div><div style="position:absolute;left:304px;top:92.4px;width:86.6px;height:38.3px;background:#03498a"></div><div style="position:absolute;left:305.5px;top:110.7px;width:53.2px;height:18.6px;background:#fff"></div><div style="position:absolute;left:360px;top:110.7px;width:29.2px;height:18.6px;background:#00e400"></div><div style="position:absolute;left:131.70px;width:400px;text-align:center;top:97.18px;font-size:9.2px;line-height:9.2px;font-weight:bold;color:#fff;white-space:nowrap;">Pollutant</div><div style="position:absolute;left:174.80px;width:400px;text-align:center;top:97.18px;font-size:9.2px;line-height:9.2px;font-weight:bold;color:#fff;white-space:nowrap;">AQI</div><div style="position:absolute;left:131.70px;width:400px;text-align:center;top:116.08px;font-size:9.2px;line-height:9.2px;font-weight:normal;color:#333;white-space:nowrap;">PM2.5</div><div style="position:absolute;left:175.30px;width:400px;text-align:center;top:116.08px;font-size:9.2px;line-height:9.2px;font-weight:normal;color:#222;white-space:nowrap;">17</div><div style="position:absolute;left:504px;top:6px;width:224px;height:25px;background:#e2e2e2"></div><div style="position:absolute;left:505px;top:7px;width:222px;height:23px;background:#03498a"></div><div style="position:absolute;left:508.00px;top:14.35px;font-size:9px;line-height:9px;font-weight:bold;color:#fff;white-space:nowrap;">Select a City</div><div style="position:absolute;left:504px;top:31.5px;width:222px;height:22px;background:#fff;border:1px solid #c9c9c9;border-radius:3px"></div><div style="position:absolute;left:511.70px;top:38.18px;font-size:9.2px;line-height:9.2px;font-weight:normal;color:#333;white-space:nowrap;">Bishkek</div><div style="position:absolute;left:701.80px;top:36.55px;font-size:11px;line-height:11px;font-weight:normal;color:#8a8a8a;white-space:nowrap;">&#215;</div><div style="position:absolute;left:714px;top:41.0px;width:0;height:0;border-left:3px solid transparent;border-right:3px solid transparent;border-top:3px solid #888"></div><div style="position:absolute;left:504px;top:69px;width:224px;height:25px;background:#e2e2e2"></div><div style="position:absolute;left:505px;top:70px;width:222px;height:23px;background:#03498a"></div><div style="position:absolute;left:508.00px;top:77.35px;font-size:9px;line-height:9px;font-weight:bold;color:#fff;white-space:nowrap;">Select a Parameter</div><div style="position:absolute;left:504px;top:94.8px;width:222px;height:22px;background:#fff;border:1px solid #c9c9c9;border-radius:3px"></div><div style="position:absolute;left:511.70px;top:101.48px;font-size:9.2px;line-height:9.2px;font-weight:normal;color:#333;white-space:nowrap;">PM2.5</div><div style="position:absolute;left:701.80px;top:99.85px;font-size:11px;line-height:11px;font-weight:normal;color:#8a8a8a;white-space:nowrap;">&#215;</div><div style="position:absolute;left:714px;top:104.3px;width:0;height:0;border-left:3px solid transparent;border-right:3px solid transparent;border-top:3px solid #888"></div><div style="position:absolute;left:504px;top:132px;width:222px;height:47px;background:#fff;border:1px solid #c8c8c8"></div><div style="position:absolute;left:511.50px;top:140.50px;font-size:9.3px;line-height:9.3px;font-weight:bold;color:#444;white-space:nowrap;">Bishkek</div><svg style="position:absolute;left:697px;top:150px" width="23" height="23" viewBox="0 0 23 23">
<rect width="23" height="23" fill="#f2b33d"/>
<circle cx="5.3" cy="17.6" r="2.3" fill="#fff"/>
<path d="M3.5 10.2 A9 9 0 0 1 12.8 19.5" stroke="#fff" stroke-width="2.6" fill="none"/>
<path d="M3.5 4.5 A15 15 0 0 1 18.5 19.5" stroke="#fff" stroke-width="2.6" fill="none"/>
</svg><div style="position:absolute;left:503.60px;top:190.99px;font-size:7.3px;line-height:7.3px;font-weight:normal;color:#555;white-space:nowrap;">Note: Values above 500 are considered Beyond the AQI. Follow</div><div style="position:absolute;left:503.60px;top:203.79px;font-size:7.3px;line-height:7.3px;font-weight:normal;color:#555;white-space:nowrap;">recommendations for the Hazardous category. Additional information</div><div style="position:absolute;left:503.60px;top:216.59px;font-size:7.3px;line-height:7.3px;font-weight:normal;color:#555;white-space:nowrap;">on reducing exposure to extremely high levels of particle pollution is</div><div style="position:absolute;left:503.60px;top:229.39px;font-size:7.3px;line-height:7.3px;font-weight:normal;color:#555;white-space:nowrap;">available <span style="font-weight:bold;color:#1a2a4a;text-decoration:underline">here</span>.</div><div style="position:absolute;left:89px;top:319px;width:111px;height:20px;background:#d3d3d3;border-radius:3px 3px 0 0"></div><div style="position:absolute;left:202px;top:319px;width:92px;height:20px;background:#d3d3d3;border-radius:3px 3px 0 0"></div><div style="position:absolute;left:15px;top:319px;width:70px;height:18px;background:#fff;border:1px solid #a9a9a9;border-top:2px solid #0a3f7f;border-bottom:none;border-radius:3px 3px 0 0"></div><div style="position:absolute;left:15px;top:339px;width:713px;height:1px;background:#a9a9a9"></div><div style="position:absolute;left:-149.00px;width:400px;text-align:center;top:325.73px;font-size:9.5px;line-height:9.5px;font-weight:normal;color:#222;white-space:nowrap;">AQI</div><div style="position:absolute;left:-55.50px;width:400px;text-align:center;top:325.73px;font-size:9.5px;line-height:9.5px;font-weight:normal;color:#666;white-space:nowrap;">Concentration</div><div style="position:absolute;left:48.00px;width:400px;text-align:center;top:325.73px;font-size:9.5px;line-height:9.5px;font-weight:normal;color:#666;white-space:nowrap;">Historical</div><div style="position:absolute;left:15.50px;top:348.44px;font-size:9.6px;line-height:9.6px;font-weight:normal;color:#222;white-space:nowrap;letter-spacing:-0.12px">Learn more about how the Air Quality Index [AQI] is calculated from the EPA <span style="font-weight:bold;color:#1a2a4a;text-decoration:underline">here</span>.</div><div style="position:absolute;left:15px;top:373px;width:534px;height:197px;background:#fff"></div><svg style="position:absolute;left:0;top:0" width="740" height="570" viewBox="0 0 740 570"><rect x="65" y="511.30" width="478" height="1" fill="#e6e6e6"/><rect x="65" y="486.70" width="478" height="1" fill="#e6e6e6"/><rect x="65" y="462.10" width="478" height="1" fill="#e6e6e6"/><rect x="65" y="437.50" width="478" height="1" fill="#e6e6e6"/><rect x="65" y="412.90" width="478" height="1" fill="#e6e6e6"/><rect x="65" y="535.90" width="478" height="1" fill="#ccd6eb"/><rect x="64.80" y="536.4" width="1" height="6" fill="#ccd6eb"/><rect x="84.68" y="536.4" width="1" height="6" fill="#ccd6eb"/><rect x="104.56" y="536.4" width="1" height="6" fill="#ccd6eb"/><rect x="124.44" y="536.4" width="1" height="6" fill="#ccd6eb"/><rect x="144.32" y="536.4" width="1" height="6" fill="#ccd6eb"/><rect x="164.20" y="536.4" width="1" height="6" fill="#ccd6eb"/><rect x="184.08" y="536.4" width="1" height="6" fill="#ccd6eb"/><rect x="203.96" y="536.4" width="1" height="6" fill="#ccd6eb"/><rect x="223.84" y="536.4" width="1" height="6" fill="#ccd6eb"/><rect x="243.72" y="536.4" width="1" height="6" fill="#ccd6eb"/><rect x="263.60" y="536.4" width="1" height="6" fill="#ccd6eb"/><rect x="283.48" y="536.4" width="1" height="6" fill="#ccd6eb"/><rect x="303.36" y="536.4" width="1" height="6" fill="#ccd6eb"/><rect x="323.24" y="536.4" width="1" height="6" fill="#ccd6eb"/><rect x="343.12" y="536.4" width="1" height="6" fill="#ccd6eb"/><rect x="363.00" y="536.4" width="1" height="6" fill="#ccd6eb"/><rect x="382.88" y="536.4" width="1" height="6" fill="#ccd6eb"/><rect x="402.76" y="536.4" width="1" height="6" fill="#ccd6eb"/><rect x="422.64" y="536.4" width="1" height="6" fill="#ccd6eb"/><rect x="442.52" y="536.4" width="1" height="6" fill="#ccd6eb"/><rect x="462.40" y="536.4" width="1" height="6" fill="#ccd6eb"/><rect x="482.28" y="536.4" width="1" height="6" fill="#ccd6eb"/><rect x="502.16" y="536.4" width="1" height="6" fill="#ccd6eb"/><rect x="522.04" y="536.4" width="1" height="6" fill="#ccd6eb"/><rect x="541.92" y="536.4" width="1" height="6" fill="#ccd6eb"/><rect x="70.04" y="521.15" width="10.4" height="15.25" fill="#ffff00" stroke="#3a3a3a" stroke-opacity="0.85" stroke-width="0.9"/><rect x="89.92" y="521.15" width="10.4" height="15.25" fill="#ffff00" stroke="#3a3a3a" stroke-opacity="0.85" stroke-width="0.9"/><rect x="109.80" y="522.38" width="10.4" height="14.02" fill="#ffff00" stroke="#3a3a3a" stroke-opacity="0.85" stroke-width="0.9"/><rect x="129.68" y="525.58" width="10.4" height="10.82" fill="#00e400" stroke="#3a3a3a" stroke-opacity="0.85" stroke-width="0.9"/><rect x="149.56" y="528.04" width="10.4" height="8.36" fill="#00e400" stroke="#3a3a3a" stroke-opacity="0.85" stroke-width="0.9"/><rect x="169.44" y="503.44" width="10.4" height="32.96" fill="#ff7e00" stroke="#3a3a3a" stroke-opacity="0.85" stroke-width="0.9"/><rect x="189.32" y="510.08" width="10.4" height="26.32" fill="#ff7e00" stroke="#3a3a3a" stroke-opacity="0.85" stroke-width="0.9"/><rect x="209.20" y="510.08" width="10.4" height="26.32" fill="#ff7e00" stroke="#3a3a3a" stroke-opacity="0.85" stroke-width="0.9"/><rect x="229.08" y="429.39" width="10.4" height="107.01" fill="#4c0026" stroke="#3a3a3a" stroke-opacity="0.85" stroke-width="0.9"/><rect x="248.96" y="469.49" width="10.4" height="66.91" fill="#99004c" stroke="#3a3a3a" stroke-opacity="0.85" stroke-width="0.9"/><rect x="268.84" y="488.43" width="10.4" height="47.97" fill="#ff0000" stroke="#3a3a3a" stroke-opacity="0.85" stroke-width="0.9"/><rect x="288.72" y="493.35" width="10.4" height="43.05" fill="#ff0000" stroke="#3a3a3a" stroke-opacity="0.85" stroke-width="0.9"/><rect x="308.60" y="493.84" width="10.4" height="42.56" fill="#ff0000" stroke="#3a3a3a" stroke-opacity="0.85" stroke-width="0.9"/><rect x="328.48" y="496.30" width="10.4" height="40.10" fill="#ff0000" stroke="#3a3a3a" stroke-opacity="0.85" stroke-width="0.9"/><rect x="348.36" y="501.47" width="10.4" height="34.93" fill="#ff7e00" stroke="#3a3a3a" stroke-opacity="0.85" stroke-width="0.9"/><rect x="368.24" y="511.55" width="10.4" height="24.85" fill="#ff7e00" stroke="#3a3a3a" stroke-opacity="0.85" stroke-width="0.9"/><rect x="388.12" y="513.77" width="10.4" height="22.63" fill="#ffff00" stroke="#3a3a3a" stroke-opacity="0.85" stroke-width="0.9"/><rect x="408.00" y="517.70" width="10.4" height="18.70" fill="#ffff00" stroke="#3a3a3a" stroke-opacity="0.85" stroke-width="0.9"/><rect x="427.88" y="519.67" width="10.4" height="16.73" fill="#ffff00" stroke="#3a3a3a" stroke-opacity="0.85" stroke-width="0.9"/><rect x="447.76" y="525.08" width="10.4" height="11.32" fill="#00e400" stroke="#3a3a3a" stroke-opacity="0.85" stroke-width="0.9"/><rect x="467.64" y="528.53" width="10.4" height="7.87" fill="#00e400" stroke="#3a3a3a" stroke-opacity="0.85" stroke-width="0.9"/><rect x="487.52" y="527.79" width="10.4" height="8.61" fill="#00e400" stroke="#3a3a3a" stroke-opacity="0.85" stroke-width="0.9"/><rect x="507.40" y="529.27" width="10.4" height="7.13" fill="#00e400" stroke="#3a3a3a" stroke-opacity="0.85" stroke-width="0.9"/><rect x="527.28" y="532.22" width="10.4" height="4.18" fill="#00e400" stroke="#3a3a3a" stroke-opacity="0.85" stroke-width="0.9"/><text x="56" y="538.90" text-anchor="end" font-family="Liberation Sans" font-size="7" letter-spacing="0.55" fill="#222" stroke="#222" stroke-width="0.15">0</text><text x="56" y="514.30" text-anchor="end" font-family="Liberation Sans" font-size="7" letter-spacing="0.55" fill="#222" stroke="#222" stroke-width="0.15">100</text><text x="56" y="489.70" text-anchor="end" font-family="Liberation Sans" font-size="7" letter-spacing="0.55" fill="#222" stroke="#222" stroke-width="0.15">200</text><text x="56" y="465.10" text-anchor="end" font-family="Liberation Sans" font-size="7" letter-spacing="0.55" fill="#222" stroke="#222" stroke-width="0.15">300</text><text x="56" y="440.50" text-anchor="end" font-family="Liberation Sans" font-size="7" letter-spacing="0.55" fill="#222" stroke="#222" stroke-width="0.15">400</text><text x="56" y="415.90" text-anchor="end" font-family="Liberation Sans" font-size="7" letter-spacing="0.55" fill="#222" stroke="#222" stroke-width="0.15">500</text><text transform="translate(33.8,471.7) rotate(-90)" text-anchor="middle" font-family="Liberation Sans" font-size="8" fill="#333">AQI</text><text transform="translate(77.44,548.6) rotate(-45)" text-anchor="end" font-family="Liberation Sans" font-size="7.9" word-spacing="1" fill="#666">10 AM</text><text transform="translate(97.32,548.6) rotate(-45)" text-anchor="end" font-family="Liberation Sans" font-size="7.9" word-spacing="1" fill="#666">11 AM</text><text transform="translate(117.20,548.6) rotate(-45)" text-anchor="end" font-family="Liberation Sans" font-size="7.9" word-spacing="1" fill="#666">12 PM</text><text transform="translate(137.08,548.6) rotate(-45)" text-anchor="end" font-family="Liberation Sans" font-size="7.9" word-spacing="1" fill="#666">1 PM</text><text transform="translate(156.96,548.6) rotate(-45)" text-anchor="end" font-family="Liberation Sans" font-size="7.9" word-spacing="1" fill="#666">2 PM</text><text transform="translate(176.84,548.6) rotate(-45)" text-anchor="end" font-family="Liberation Sans" font-size="7.9" word-spacing="1" fill="#666">3 PM</text><text transform="translate(196.72,548.6) rotate(-45)" text-anchor="end" font-family="Liberation Sans" font-size="7.9" word-spacing="1" fill="#666">4 PM</text><text transform="translate(216.60,548.6) rotate(-45)" text-anchor="end" font-family="Liberation Sans" font-size="7.9" word-spacing="1" fill="#666">5 PM</text><text transform="translate(236.48,548.6) rotate(-45)" text-anchor="end" font-family="Liberation Sans" font-size="7.9" word-spacing="1" fill="#666">6 PM</text><text transform="translate(256.36,548.6) rotate(-45)" text-anchor="end" font-family="Liberation Sans" font-size="7.9" word-spacing="1" fill="#666">7 PM</text><text transform="translate(276.24,548.6) rotate(-45)" text-anchor="end" font-family="Liberation Sans" font-size="7.9" word-spacing="1" fill="#666">8 PM</text><text transform="translate(296.12,548.6) rotate(-45)" text-anchor="end" font-family="Liberation Sans" font-size="7.9" word-spacing="1" fill="#666">9 PM</text><text transform="translate(316.00,548.6) rotate(-45)" text-anchor="end" font-family="Liberation Sans" font-size="7.9" word-spacing="1" fill="#666">10 PM</text><text transform="translate(335.88,548.6) rotate(-45)" text-anchor="end" font-family="Liberation Sans" font-size="7.9" word-spacing="1" fill="#666">11 PM</text><text transform="translate(355.76,548.6) rotate(-45)" text-anchor="end" font-family="Liberation Sans" font-size="7.9" word-spacing="1" fill="#666">1/10/2021 12 AM</text><text transform="translate(375.64,548.6) rotate(-45)" text-anchor="end" font-family="Liberation Sans" font-size="7.9" word-spacing="1" fill="#666">1 AM</text><text transform="translate(395.52,548.6) rotate(-45)" text-anchor="end" font-family="Liberation Sans" font-size="7.9" word-spacing="1" fill="#666">2 AM</text><text transform="translate(415.40,548.6) rotate(-45)" text-anchor="end" font-family="Liberation Sans" font-size="7.9" word-spacing="1" fill="#666">3 AM</text><text transform="translate(435.28,548.6) rotate(-45)" text-anchor="end" font-family="Liberation Sans" font-size="7.9" word-spacing="1" fill="#666">4 AM</text><text transform="translate(455.16,548.6) rotate(-45)" text-anchor="end" font-family="Liberation Sans" font-size="7.9" word-spacing="1" fill="#666">5 AM</text><text transform="translate(475.04,548.6) rotate(-45)" text-anchor="end" font-family="Liberation Sans" font-size="7.9" word-spacing="1" fill="#666">6 AM</text><text transform="translate(494.92,548.6) rotate(-45)" text-anchor="end" font-family="Liberation Sans" font-size="7.9" word-spacing="1" fill="#666">7 AM</text><text transform="translate(514.80,548.6) rotate(-45)" text-anchor="end" font-family="Liberation Sans" font-size="7.9" word-spacing="1" fill="#666">8 AM</text><text transform="translate(534.68,548.6) rotate(-45)" text-anchor="end" font-family="Liberation Sans" font-size="7.9" word-spacing="1" fill="#666">9 AM</text><text x="282" y="388.7" text-anchor="middle" font-family="Liberation Sans" font-size="12" letter-spacing="0.2" fill="#333">Bishkek – PM2.5</text></svg><div style="position:absolute;left:560px;top:373px;width:168px;height:195px;background:#03498a"></div><div style="position:absolute;left:561px;top:423px;width:166px;height:77px;background:#00e400"></div><div style="position:absolute;left:561px;top:500px;width:166px;height:67px;background:#efefef"></div><div style="position:absolute;left:444.00px;width:400px;text-align:center;top:378.50px;font-size:10px;line-height:10px;font-weight:bold;color:#fff;white-space:nowrap;">Current Conditions</div><div style="position:absolute;left:444.00px;width:400px;text-align:center;top:394.50px;font-size:8px;line-height:8px;font-weight:bold;color:#fff;white-space:nowrap;">observed at</div><div style="position:absolute;left:444.00px;width:400px;text-align:center;top:406.90px;font-size:10px;line-height:10px;font-weight:bold;color:#fff;white-space:nowrap;">Jan 10, 2021 9:00 AM (LT)</div><div style="position:absolute;left:444.00px;width:400px;text-align:center;top:435.32px;font-size:13.5px;line-height:13.5px;font-weight:bold;color:#111;white-space:nowrap;">17 AQI</div><div style="position:absolute;left:444.00px;width:400px;text-align:center;top:454.72px;font-size:13.5px;line-height:13.5px;font-weight:bold;color:#111;white-space:nowrap;">Good</div><div style="position:absolute;left:444.00px;width:400px;text-align:center;top:473.72px;font-size:13.5px;line-height:13.5px;font-weight:bold;color:#111;white-space:nowrap;">PM2.5</div><div style="position:absolute;left:444.00px;width:400px;text-align:center;top:506.90px;font-size:8px;line-height:8px;font-weight:bold;color:#222;white-space:nowrap;">Health Message</div><div style="position:absolute;left:564.20px;top:522.53px;font-size:8.2px;line-height:8.2px;font-weight:normal;color:#444;white-space:nowrap;">The AQI value for your community is</div><div style="position:absolute;left:564.20px;top:536.33px;font-size:8.2px;line-height:8.2px;font-weight:normal;color:#444;white-space:nowrap;">between 0 and 50. Air quality is satisfactory</div><div style="position:absolute;left:564.20px;top:550.13px;font-size:8.2px;line-height:8.2px;font-weight:normal;color:#444;white-space:nowrap;">and poses little or no health risk.</div>
</body></html>
